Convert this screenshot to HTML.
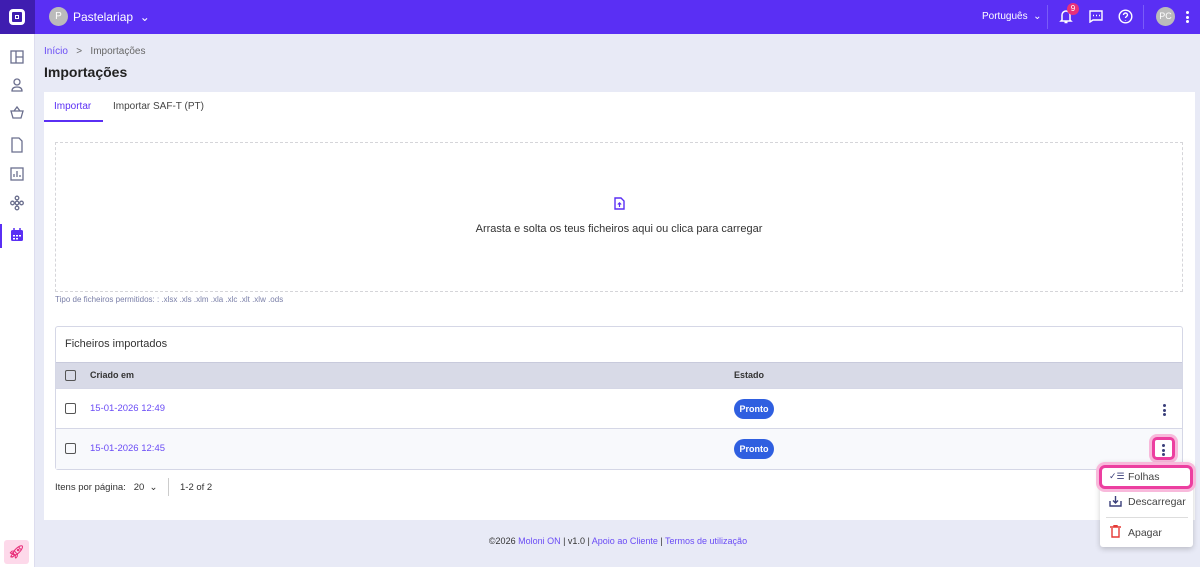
<!DOCTYPE html>
<html><head><meta charset="utf-8"><style>
*{box-sizing:border-box;margin:0;padding:0}
body{width:1200px;height:567px;overflow:hidden;background:#e8eaf6;font-family:"Liberation Sans",sans-serif;color:#333;position:relative;font-size:11px}
.top{position:absolute;left:0;top:0;width:1200px;height:34px;background:#5a2ff4}
.logo{position:absolute;left:0;top:0;width:35px;height:34px;background:#3f1db0}
.side{position:absolute;left:0;top:34px;width:35px;height:533px;background:#fff;border-right:1px solid #dde}
.abs{position:absolute}
.card{position:absolute;left:44px;top:92px;width:1151px;height:428px;background:#fff}
.row{position:absolute;left:56px;width:1126px;border-top:1px solid #d5d7e6}
.cb{position:absolute;left:9px;width:11px;height:11px;border:1.5px solid #555;border-radius:2px}
.lnk{color:#6a4cf5}
.badge{position:absolute;left:678px;width:40px;height:20px;border-radius:10px;background:#2f5fe0;color:#fff;font-size:9px;text-align:center;line-height:20px;font-weight:bold}
.dots{position:absolute;width:3px}
.dots i{display:block;width:3px;height:3px;background:#3a3f7a;border-radius:50%;margin-bottom:1.5px}
</style></head><body>
<div class="top"></div>
<div class="logo"><div class="abs" style="left:9px;top:9px;width:16px;height:16px;border:3px solid #fff;border-radius:4px"><div class="abs" style="left:3px;top:3px;width:4px;height:4px;border:1.5px solid #fff"></div></div></div>
<div class="abs" style="left:49px;top:7px;width:19px;height:19px;border-radius:50%;background:#bbb;color:#fff;font-size:10px;text-align:center;line-height:19px">P</div>
<div class="abs" style="left:73px;top:10px;color:#fff;font-size:12px">Pastelariap &nbsp;⌄</div>
<div class="abs" style="left:982px;top:11px;color:#fff;font-size:10px">Português &nbsp;⌄</div>
<div class="abs" style="left:1047px;top:5px;width:1px;height:24px;background:#7a5cf7"></div>
<svg class="abs" style="left:1059px;top:9px" width="14" height="15" viewBox="0 0 14 15" fill="none" stroke="#fff" stroke-width="1.5"><path d="M3 11V6a4 4 0 018 0v5l1 1H2z M5.5 13.5h3"/></svg>
<div class="abs" style="left:1067px;top:3px;width:12px;height:12px;border-radius:50%;background:#e8307a;color:#fff;font-size:8px;text-align:center;line-height:12px">9</div>
<svg class="abs" style="left:1089px;top:10px" width="14" height="13" fill="none" stroke="#fff" stroke-width="1.4"><path d="M1 1h12v9H4l-3 2z"/><path d="M4 5.5h1M7 5.5h1M10 5.5h1"/></svg>
<svg class="abs" style="left:1118px;top:9px" width="15" height="15" fill="none" stroke="#fff" stroke-width="1.4"><circle cx="7.5" cy="7.5" r="6.3"/><path d="M5.5 6a2 2 0 114 0c0 1.5-2 1.5-2 3M7.5 11v.5"/></svg>
<div class="abs" style="left:1143px;top:5px;width:1px;height:24px;background:#7a5cf7"></div>
<div class="abs" style="left:1156px;top:7px;width:19px;height:19px;border-radius:50%;background:#bbb;color:#fff;font-size:9px;text-align:center;line-height:19px">PC</div>
<div class="dots" style="left:1186px;top:11px"><i style="background:#fff"></i><i style="background:#fff"></i><i style="background:#fff"></i></div>

<div class="side">
<svg class="abs" style="left:10px;top:16px" width="14" height="200" fill="none" stroke="#6b6f8e" stroke-width="1.3">
<rect x="1" y="1" width="12" height="12"/><path d="M6 1v12M6 7h7"/>
<circle cx="7" cy="32" r="3"/><path d="M2 41c0-3 2-4 5-4s5 1 5 4z"/>
<path d="M1 61h12l-2 7H3z M4 61l3-4 3 4"/>
<path d="M2 88h7l3 3v11H2z"/>
<rect x="1" y="118" width="12" height="12"/><path d="M4 127v-3M7 127v-6M10 127v-2"/>
<circle cx="7" cy="148" r="1.8"/><circle cx="2.5" cy="153" r="1.8"/><circle cx="7" cy="153" r="1.8"/><circle cx="11.5" cy="153" r="1.8"/><circle cx="7" cy="158" r="1.8"/>
<circle cx="7" cy="214" r="2.5"/><circle cx="7" cy="214" r="5.5" stroke-dasharray="2.5 1.5"/>
</svg>
<div class="abs" style="left:0;top:190px;width:2px;height:24px;background:#5a2ff4"></div>
<svg class="abs" style="left:10px;top:194px" width="14" height="14"><rect x="1" y="2" width="12" height="11" rx="1.5" fill="#5a2ff4"/><path d="M4 0v3M10 0v3" stroke="#5a2ff4" stroke-width="1.5"/><g fill="#fff"><rect x="3" y="7" width="2" height="1.5"/><rect x="6" y="7" width="2" height="1.5"/><rect x="9" y="7" width="2" height="1.5"/><rect x="3" y="10" width="2" height="1.5"/><rect x="6" y="10" width="2" height="1.5"/></g></svg>
<div class="abs" style="left:4px;top:506px;width:25px;height:24px;background:#fdd9ea;border-radius:3px;color:#e8307a;text-align:center;line-height:24px;font-size:13px;font-weight:bold">🚀︎</div>
</div>

<div class="abs" style="left:44px;top:46px;font-size:10px;color:#666"><span class="lnk">Início</span> &nbsp;&nbsp;&gt;&nbsp;&nbsp; Importações</div>
<div class="abs" style="left:44px;top:64px;font-size:14px;font-weight:bold;color:#222">Importações</div>

<div class="card">
<div class="abs" style="left:10px;top:9px;font-size:10px;color:#5a2ff4">Importar</div>
<div class="abs" style="left:69px;top:9px;font-size:10px;color:#444">Importar SAF-T (PT)</div>
<div class="abs" style="left:0;top:28px;width:59px;height:2px;background:#5a2ff4"></div>
<div class="abs" style="left:11px;top:50px;width:1128px;height:150px;border:1px dashed #d5d5d9"></div>
<svg class="abs" style="left:570px;top:105px" width="11" height="13"><path d="M1 1h6l3 3v8H1z" fill="none" stroke="#5a2ff4" stroke-width="1.4"/><path d="M5.5 10V6M3.8 7.5l1.7-1.7 1.7 1.7" stroke="#5a2ff4" stroke-width="1.2" fill="none"/></svg>
<div class="abs" style="left:0;top:131px;width:1150px;text-align:center;font-size:11px;color:#333">Arrasta e solta os teus ficheiros aqui ou clica para carregar</div>
<div class="abs" style="left:11px;top:203px;font-size:8px;color:#7a7fa8">Tipo de ficheiros permitidos: : .xlsx .xls .xlm .xla .xlc .xlt .xlw .ods</div>
</div>

<div class="abs" style="left:55px;top:326px;width:1128px;height:144px;border:1px solid #d5d7e6;border-radius:3px;background:#fff"></div>
<div class="abs" style="left:65px;top:338px;font-size:11px;color:#333">Ficheiros importados</div>
<div class="row" style="top:362px;height:26px;background:#d8dae7;border-color:#c8cadc"><div class="cb" style="top:7px"></div><div class="abs" style="left:34px;top:7px;font-size:9px;font-weight:bold;color:#333">Criado em</div><div class="abs" style="left:678px;top:7px;font-size:9px;font-weight:bold;color:#333">Estado</div></div>
<div class="row" style="top:388px;height:40px"><div class="cb" style="top:14px"></div><div class="abs lnk" style="left:34px;top:14px;font-size:9.5px">15-01-2026 12:49</div><div class="badge" style="top:10px">Pronto</div><div class="dots" style="left:1107px;top:15px"><i></i><i></i><i></i></div></div>
<div class="row" style="top:428px;height:41px;background:#f8f9fc"><div class="cb" style="top:14px"></div><div class="abs lnk" style="left:34px;top:14px;font-size:9.5px">15-01-2026 12:45</div><div class="badge" style="top:10px">Pronto</div>
<div class="abs" style="left:1096px;top:8px;width:23px;height:23px;border:3px solid #ec3fa0;border-radius:5px;box-shadow:0 0 0 3px #f8b9db;background:#fff"></div><div class="dots" style="left:1106px;top:15px"><i></i><i></i><i></i></div></div>

<div class="abs" style="left:55px;top:482px;font-size:9.5px;color:#333">Itens por página: &nbsp;&nbsp;20 &nbsp;⌄</div>
<div class="abs" style="left:168px;top:478px;width:1px;height:18px;background:#ccc"></div>
<div class="abs" style="left:180px;top:482px;font-size:9.5px;color:#333">1-2 of 2</div>

<div class="abs" style="left:1100px;top:462px;width:93px;height:85px;background:#fff;border-radius:3px;box-shadow:0 2px 6px rgba(0,0,0,.2)"></div>
<div class="abs" style="left:1099px;top:465px;width:94px;height:24px;border:3px solid #ec3fa0;border-radius:6px;box-shadow:0 0 0 3px #f8b9db;background:#fff"></div>
<div class="abs" style="left:1109px;top:471px;font-size:9px;color:#3a3f7a">✓☰</div>
<div class="abs" style="left:1128px;top:471px;font-size:10.5px;color:#444">Folhas</div>
<svg class="abs" style="left:1109px;top:495px" width="13" height="12" fill="none" stroke="#3a3f7a" stroke-width="1.4"><path d="M1 6v5h11V6M6.5 1v7M4 5.5l2.5 2.5 2.5-2.5"/></svg>
<div class="abs" style="left:1128px;top:496px;font-size:10.5px;color:#444">Descarregar</div>
<div class="abs" style="left:1106px;top:517px;width:82px;height:1px;background:#ddd"></div>
<svg class="abs" style="left:1110px;top:525px" width="11" height="13" fill="none" stroke="#e53935" stroke-width="1.4"><path d="M0 2h11M2 3v9h7V3M4 2V0.7h3V2"/></svg>
<div class="abs" style="left:1128px;top:527px;font-size:10.5px;color:#444">Apagar</div>

<div class="abs" style="left:0;top:536px;width:1236px;text-align:center;font-size:9px;color:#333">©2026 <span class="lnk">Moloni ON</span> | v1.0 | <span class="lnk">Apoio ao Cliente</span> | <span class="lnk">Termos de utilização</span></div>
</body></html>
